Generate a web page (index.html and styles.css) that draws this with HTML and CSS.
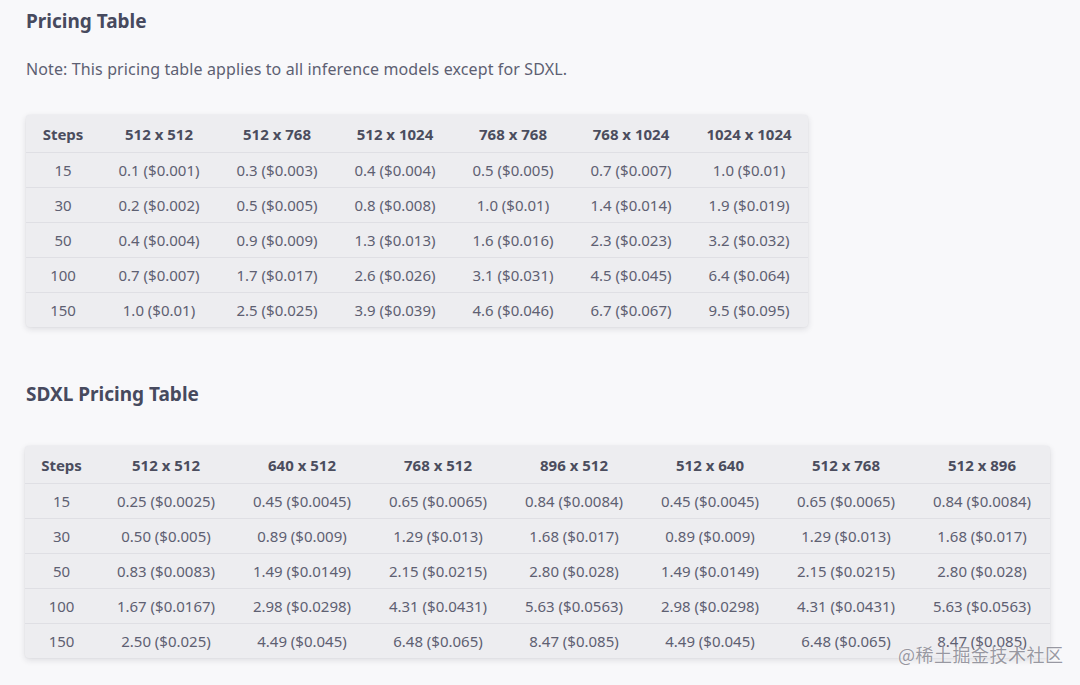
FILE: index.html
```html
<!DOCTYPE html>
<html lang="en">
<head>
<meta charset="utf-8">
<title>Pricing Table</title>
<link rel="stylesheet" href="styles.css">
</head>
<body>
<main class="page">
  <h2 class="title">Pricing Table</h2>
  <p class="note">Note: This pricing table applies to all inference models except for SDXL.</p>
  <table class="pricing pricing-std">
    <thead>
      <tr><th class="steps">Steps</th><th>512 x 512</th><th>512 x 768</th><th>512 x 1024</th><th>768 x 768</th><th>768 x 1024</th><th>1024 x 1024</th></tr>
    </thead>
    <tbody>
      <tr><td>15</td><td>0.1 ($0.001)</td><td>0.3 ($0.003)</td><td>0.4 ($0.004)</td><td>0.5 ($0.005)</td><td>0.7 ($0.007)</td><td>1.0 ($0.01)</td></tr>
      <tr><td>30</td><td>0.2 ($0.002)</td><td>0.5 ($0.005)</td><td>0.8 ($0.008)</td><td>1.0 ($0.01)</td><td>1.4 ($0.014)</td><td>1.9 ($0.019)</td></tr>
      <tr><td>50</td><td>0.4 ($0.004)</td><td>0.9 ($0.009)</td><td>1.3 ($0.013)</td><td>1.6 ($0.016)</td><td>2.3 ($0.023)</td><td>3.2 ($0.032)</td></tr>
      <tr><td>100</td><td>0.7 ($0.007)</td><td>1.7 ($0.017)</td><td>2.6 ($0.026)</td><td>3.1 ($0.031)</td><td>4.5 ($0.045)</td><td>6.4 ($0.064)</td></tr>
      <tr><td>150</td><td>1.0 ($0.01)</td><td>2.5 ($0.025)</td><td>3.9 ($0.039)</td><td>4.6 ($0.046)</td><td>6.7 ($0.067)</td><td>9.5 ($0.095)</td></tr>
    </tbody>
  </table>

  <h2 class="title title-sdxl">SDXL Pricing Table</h2>
  <table class="pricing pricing-sdxl">
    <thead>
      <tr><th class="steps">Steps</th><th>512 x 512</th><th>640 x 512</th><th>768 x 512</th><th>896 x 512</th><th>512 x 640</th><th>512 x 768</th><th>512 x 896</th></tr>
    </thead>
    <tbody>
      <tr><td>15</td><td>0.25 ($0.0025)</td><td>0.45 ($0.0045)</td><td>0.65 ($0.0065)</td><td>0.84 ($0.0084)</td><td>0.45 ($0.0045)</td><td>0.65 ($0.0065)</td><td>0.84 ($0.0084)</td></tr>
      <tr><td>30</td><td>0.50 ($0.005)</td><td>0.89 ($0.009)</td><td>1.29 ($0.013)</td><td>1.68 ($0.017)</td><td>0.89 ($0.009)</td><td>1.29 ($0.013)</td><td>1.68 ($0.017)</td></tr>
      <tr><td>50</td><td>0.83 ($0.0083)</td><td>1.49 ($0.0149)</td><td>2.15 ($0.0215)</td><td>2.80 ($0.028)</td><td>1.49 ($0.0149)</td><td>2.15 ($0.0215)</td><td>2.80 ($0.028)</td></tr>
      <tr><td>100</td><td>1.67 ($0.0167)</td><td>2.98 ($0.0298)</td><td>4.31 ($0.0431)</td><td>5.63 ($0.0563)</td><td>2.98 ($0.0298)</td><td>4.31 ($0.0431)</td><td>5.63 ($0.0563)</td></tr>
      <tr><td>150</td><td>2.50 ($0.025)</td><td>4.49 ($0.045)</td><td>6.48 ($0.065)</td><td>8.47 ($0.085)</td><td>4.49 ($0.045)</td><td>6.48 ($0.065)</td><td>8.47 ($0.085)</td></tr>
    </tbody>
  </table>
</main>
<div class="watermark">@稀土掘金技术社区</div>
</body>
</html>
```

FILE: styles.css
```css
* { box-sizing: border-box; }

html, body {
  margin: 0;
  padding: 0;
  background: #f8f8fa;
}

body {
  font-family: "Noto Sans", "Liberation Sans", sans-serif;
  color: #5b5d6e;
  width: 1080px;
  height: 685px;
  overflow: hidden;
  position: relative;
}

.page {
  padding-left: 26px;
}

.title {
  margin: 7px 0 0;
  font-size: 19px;
  line-height: 28px;
  font-weight: 700;
  color: #474a5e;
}

.title-sdxl {
  margin-top: 53px;
}

.note {
  margin: 22px 0 0;
  font-size: 16px;
  line-height: 24px;
  letter-spacing: 0.12px;
  color: #5d6072;
}

.pricing {
  margin-top: 34px;
  border-collapse: separate;
  border-spacing: 0;
  background: #ededf0;
  border-radius: 4px;
  box-shadow: 0 2px 6px rgba(30, 30, 50, 0.13), 0 0 2px rgba(30, 30, 50, 0.06);
  table-layout: fixed;
  font-size: 15px;
}

.pricing-sdxl {
  margin-top: 38px;
  margin-left: -1px;
}

.pricing th,
.pricing td {
  text-align: center;
  padding: 0;
  white-space: nowrap;
  border-bottom: 1px solid #dfdfe4;
}

.pricing th {
  height: 38px;
  font-weight: 700;
  color: #4b4d5e;
}

.pricing td {
  height: 35px;
  color: #5e6072;
}

.pricing tbody tr:last-child td {
  border-bottom: none;
  height: 34px;
}

.pricing-std th { width: 118px; }
.pricing-std th.steps { width: 74px; }

.pricing-sdxl th { width: 136px; }
.pricing-sdxl th.steps { width: 73px; }

.watermark {
  position: absolute;
  left: 898px;
  top: 641px;
  font-family: "Noto Sans CJK SC", sans-serif;
  font-size: 18px;
  line-height: 26px;
  color: rgba(120, 120, 132, 0.75);
  text-shadow: 0 0 2px rgba(255, 255, 255, 0.9);
  letter-spacing: 0.5px;
}
```
